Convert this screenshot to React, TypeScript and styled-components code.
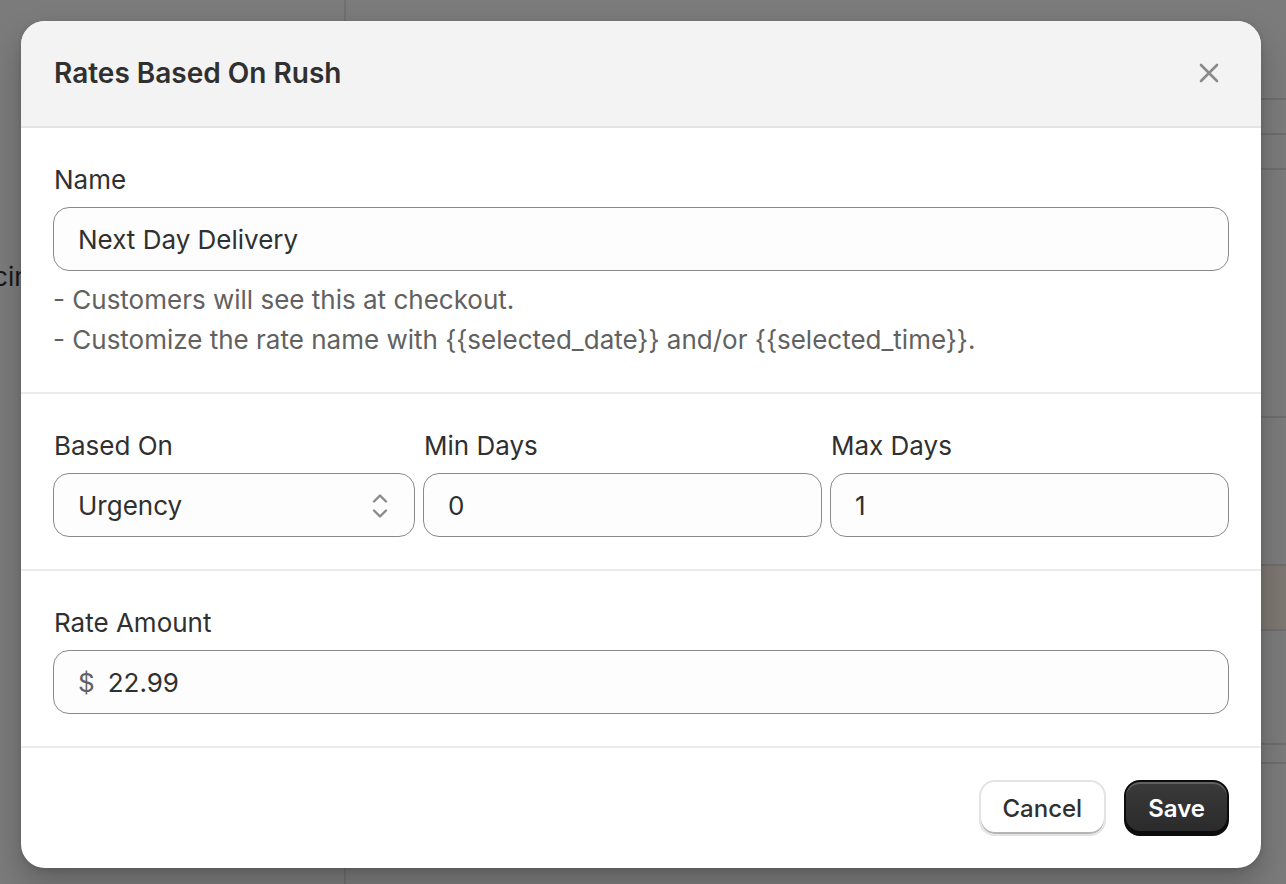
import React, { useState } from 'react';
import styled, { createGlobalStyle } from 'styled-components';

const GlobalStyle = createGlobalStyle`
  html, body {
    margin: 0;
    padding: 0;
  }
  body {
    font-family: Inter, "Noto Sans", "Liberation Sans", sans-serif;
    color: #303030;
    -webkit-font-smoothing: antialiased;
  }
  * {
    box-sizing: border-box;
  }
`;

// Page behind the dialog (mostly hidden by the backdrop)
const Page = styled.div`
  position: relative;
  width: 1286px;
  height: 884px;
  overflow: hidden;
  display: grid;
  grid-template-columns: 346px 1fr;
  background: #f1f1f1;
`;

const Sidebar = styled.aside`
  border-right: 2px solid #dcdcdc;
  padding-top: 257px;
`;

const SideItem = styled.div`
  font-size: 26px;
  line-height: 40px;
  text-indent: -40px;
  color: #303030;
  white-space: nowrap;
`;

const Main = styled.main`
  display: flex;
  flex-direction: column;
`;

const BgRow = styled.div<{ $h: number; $tint?: boolean }>`
  height: ${(p) => p.$h}px;
  flex-shrink: 0;
  border-bottom: 2px solid #d6d6d6;
  background: ${(p) => (p.$tint ? '#f3e9dc' : 'transparent')};
`;

const Backdrop = styled.div`
  position: absolute;
  inset: 0;
  background: rgba(0, 0, 0, 0.49);
  display: flex;
  align-items: flex-start;
  justify-content: flex-start;
  padding: 21px 0 0 21px;
`;

const Dialog = styled.div`
  width: 1240px;
  background: #ffffff;
  border-radius: 24px;
  overflow: hidden;
  box-shadow: 0 16px 32px rgba(0, 0, 0, 0.22), 0 2px 6px rgba(0, 0, 0, 0.12);
`;

const Header = styled.header`
  height: 107px;
  display: flex;
  align-items: center;
  justify-content: space-between;
  padding: 0 32px 2px 33px;
  background: #f3f3f3;
  border-bottom: 2px solid #e3e3e3;
`;

const Title = styled.h2`
  margin: 0;
  font-size: 28px;
  line-height: 40px;
  font-weight: 600;
  color: #303030;
`;

const CloseButton = styled.button`
  width: 40px;
  height: 40px;
  border: none;
  background: none;
  padding: 0;
  display: flex;
  align-items: center;
  justify-content: center;
  cursor: pointer;
  color: #8a8a8a;
`;

const Section = styled.section`
  padding: 32px;
  border-bottom: 2px solid #ebebeb;
`;

const Label = styled.label`
  display: block;
  font-size: 26px;
  line-height: 40px;
  color: #303030;
  margin: 0 0 7px 1px;
`;

const Input = styled.input`
  display: block;
  width: 100%;
  height: 64px;
  padding: 0 24px;
  border: 1.3px solid #8a8a8a;
  border-radius: 16px;
  background: #fdfdfd;
  font-family: inherit;
  font-size: 26px;
  color: #303030;
  outline: none;
`;

const HelpText = styled.div`
  margin-top: 9px;
  font-size: 26px;
  line-height: 40px;
  color: #616161;
`;

const FieldGrid = styled.div`
  display: grid;
  grid-template-columns: 362px 1fr 1fr;
  gap: 8px;
`;

const Field = styled.div`
  display: flex;
  flex-direction: column;
`;

const SelectWrap = styled.div`
  position: relative;
`;

const Select = styled.select`
  display: block;
  width: 100%;
  height: 64px;
  padding: 0 60px 0 24px;
  border: 1.3px solid #8a8a8a;
  border-radius: 16px;
  background: #fdfdfd;
  font-family: inherit;
  font-size: 26px;
  color: #303030;
  appearance: none;
  outline: none;
`;

const SelectIcon = styled.span`
  position: absolute;
  right: 27px;
  top: 50%;
  transform: translateY(-50%);
  margin-top: 1px;
  display: flex;
  pointer-events: none;
  color: #8a8a8a;
`;

const PrefixBox = styled.div`
  display: flex;
  align-items: center;
  gap: 13px;
  height: 64px;
  padding: 0 24px;
  border: 1.3px solid #8a8a8a;
  border-radius: 16px;
  background: #fdfdfd;
`;

const Prefix = styled.span`
  font-size: 26px;
  color: #616161;
`;

const BareInput = styled.input`
  flex: 1;
  min-width: 0;
  border: none;
  background: transparent;
  font-family: inherit;
  font-size: 26px;
  color: #303030;
  outline: none;
  padding: 0;
`;

const Footer = styled.footer`
  display: flex;
  justify-content: flex-end;
  gap: 18px;
  padding: 32px;
`;

const Button = styled.button<{ $primary?: boolean }>`
  height: 56px;
  padding: 0 22px;
  border-radius: 16px;
  font-family: inherit;
  font-size: 24px;
  font-weight: ${(p) => (p.$primary ? 600 : 500)};
  cursor: pointer;
  color: ${(p) => (p.$primary ? '#ffffff' : '#303030')};
  background: ${(p) => (p.$primary ? 'linear-gradient(#3a3a3a, #2a2a2a)' : '#ffffff')};
  border: ${(p) => (p.$primary ? '2px solid #0c0c0c' : '2px solid #e3e3e3')};
  box-shadow: ${(p) =>
    p.$primary
      ? 'inset 0 -3px 0 #0c0c0c, inset 0 2px 0 rgba(255,255,255,0.2)'
      : 'inset 0 -2px 0 #b5b5b5'};
`;

const bgRows = [
  { h: 100 },
  { h: 35 },
  { h: 35 },
  { h: 248 },
  { h: 148 },
  { h: 65, tint: true },
  { h: 114 },
  { h: 19 },
];

const CloseIcon = () => (
  <svg width="20" height="20" viewBox="0 0 20 20" fill="none">
    <path d="M2 2L18 18M18 2L2 18" stroke="currentColor" strokeWidth="2.6" strokeLinecap="round" />
  </svg>
);

const UpDownIcon = () => (
  <svg width="16" height="26" viewBox="0 0 16 26" fill="none">
    <path
      d="M2 8.5L8 2.5L14 8.5M2 17.5L8 23.5L14 17.5"
      stroke="currentColor"
      strokeWidth="2.4"
      strokeLinecap="round"
      strokeLinejoin="round"
    />
  </svg>
);

const App: React.FC = () => {
  const [name, setName] = useState('Next Day Delivery');
  const [basedOn, setBasedOn] = useState('urgency');
  const [minDays, setMinDays] = useState('0');
  const [maxDays, setMaxDays] = useState('1');
  const [amount, setAmount] = useState('22.99');

  return (
    <>
      <GlobalStyle />
      <Page>
        <Sidebar>
          <SideItem>Pricing rules</SideItem>
        </Sidebar>
        <Main>
          {bgRows.map((row, i) => (
            <BgRow key={i} $h={row.h} $tint={row.tint} />
          ))}
        </Main>

        <Backdrop>
          <Dialog role="dialog" aria-labelledby="rush-title">
            <Header>
              <Title id="rush-title">Rates Based On Rush</Title>
              <CloseButton aria-label="Close">
                <CloseIcon />
              </CloseButton>
            </Header>

            <Section>
              <Label htmlFor="rate-name">Name</Label>
              <Input id="rate-name" value={name} onChange={(e) => setName(e.target.value)} />
              <HelpText>
                <div>- Customers will see this at checkout.</div>
                <div>- Customize the rate name with {'{{selected_date}}'} and/or {'{{selected_time}}'}.</div>
              </HelpText>
            </Section>

            <Section>
              <FieldGrid>
                <Field>
                  <Label htmlFor="based-on">Based On</Label>
                  <SelectWrap>
                    <Select id="based-on" value={basedOn} onChange={(e) => setBasedOn(e.target.value)}>
                      <option value="urgency">Urgency</option>
                      <option value="date">Delivery Date</option>
                    </Select>
                    <SelectIcon>
                      <UpDownIcon />
                    </SelectIcon>
                  </SelectWrap>
                </Field>
                <Field>
                  <Label htmlFor="min-days">Min Days</Label>
                  <Input id="min-days" value={minDays} onChange={(e) => setMinDays(e.target.value)} />
                </Field>
                <Field>
                  <Label htmlFor="max-days">Max Days</Label>
                  <Input id="max-days" value={maxDays} onChange={(e) => setMaxDays(e.target.value)} />
                </Field>
              </FieldGrid>
            </Section>

            <Section>
              <Label htmlFor="rate-amount">Rate Amount</Label>
              <PrefixBox>
                <Prefix>$</Prefix>
                <BareInput id="rate-amount" value={amount} onChange={(e) => setAmount(e.target.value)} />
              </PrefixBox>
            </Section>

            <Footer>
              <Button>Cancel</Button>
              <Button $primary>Save</Button>
            </Footer>
          </Dialog>
        </Backdrop>
      </Page>
    </>
  );
};

export default App;
